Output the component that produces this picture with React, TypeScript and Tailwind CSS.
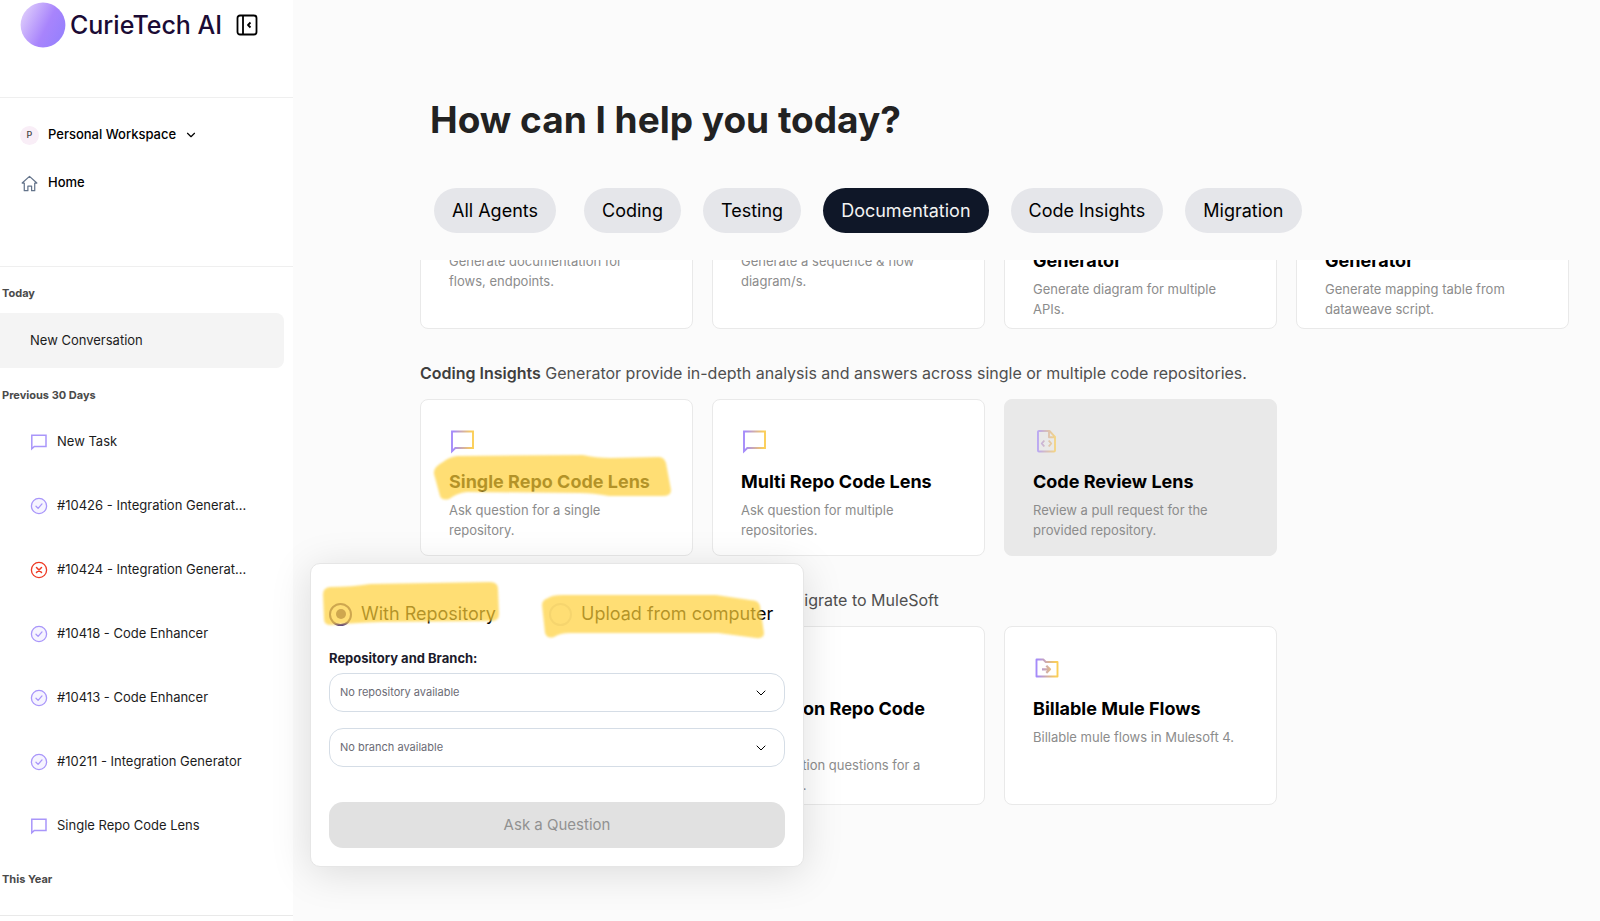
import { useState } from "react";
import { ChevronDown } from "lucide-react";

type Status = "chat" | "done" | "failed";

const HISTORY: { label: string; status: Status }[] = [
  { label: "New Task", status: "chat" },
  { label: "#10426 - Integration Generat...", status: "done" },
  { label: "#10424 - Integration Generat...", status: "failed" },
  { label: "#10418 - Code Enhancer", status: "done" },
  { label: "#10413 - Code Enhancer", status: "done" },
  { label: "#10211 - Integration Generator", status: "done" },
  { label: "Single Repo Code Lens", status: "chat" },
];

const TABS = ["All Agents", "Coding", "Testing", "Documentation", "Code Insights", "Migration"];

type IconName = "chat" | "file" | "folder";

interface Agent {
  title: string;
  text: string;
  icon: IconName;
  disabled?: boolean;
  marked?: boolean;
}

const DOCUMENTATION: Agent[] = [
  { title: "API Documentation", text: "Generate documentation for flows, endpoints.", icon: "file" },
  { title: "Flow Diagram", text: "Generate a sequence & flow diagram/s.", icon: "file" },
  { title: "Multi API Diagram Generator", text: "Generate diagram for multiple APIs.", icon: "file" },
  { title: "Mapping Table Doc Generator", text: "Generate mapping table from dataweave script.", icon: "file" },
];

const INSIGHTS: Agent[] = [
  { title: "Single Repo Code Lens", text: "Ask question for a single repository.", icon: "chat", marked: true },
  { title: "Multi Repo Code Lens", text: "Ask question for multiple repositories.", icon: "chat" },
  { title: "Code Review Lens", text: "Review a pull request for the provided repository.", icon: "file", disabled: true },
];

const MIGRATION: Agent[] = [
  { title: "Migration Generator", text: "Migrate a project to MuleSoft.", icon: "folder" },
  { title: "Migration Repo Code Lens", text: "Ask migration questions for a repository.", icon: "chat" },
  { title: "Billable Mule Flows", text: "Billable mule flows in Mulesoft 4.", icon: "folder" },
];

function StatusIcon({ status }: { status: Status }) {
  if (status === "chat") {
    return (
      <svg viewBox="0 0 18 18" className="w-[18px] h-[18px] shrink-0" fill="none" stroke="#a996fa" strokeWidth="1.5">
        <path d="M1.8 2.2h14.200v11.2H4.3L1.8 15.800z" />
      </svg>
    );
  }
  const failed = status === "failed";
  return (
    <svg
      viewBox="0 0 18 18"
      className="w-[18px] h-[18px] shrink-0"
      fill={failed ? "#fff" : "#f6f4ff"}
      stroke={failed ? "#ee3a24" : "#a996fa"}
      strokeWidth="1.3"
      strokeLinecap="round"
      strokeLinejoin="round"
    >
      <circle cx="9" cy="9" r="7.6" />
      {failed ? <path d="M6.5 6.5l5 5M11.5 6.5l-5 5" strokeWidth="1.5" /> : <path d="M6 9.3l2.1 2.1L12 6.9" fill="none" />}
    </svg>
  );
}

function AgentIcon({ name }: { name: IconName }) {
  return (
    <svg viewBox="0 0 26 26" className="w-[26px] h-[26px]" fill="none" stroke={`url(#grad-${name})`} strokeWidth="1.9" strokeLinejoin="round">
      <defs>
        <linearGradient id={`grad-${name}`} gradientUnits="userSpaceOnUse" x1="2" y1="0" x2="25" y2="0">
          <stop offset="0.1" stopColor="#a58bfa" />
          <stop offset="0.9" stopColor="#fbce57" />
        </linearGradient>
      </defs>
      {name === "chat" && <path d="M3 1.500h21v16.500H6.300L3 21.300z" strokeLinejoin="miter" />}
      {name === "file" && (
        <>
          <path d="M6 1h10.500L22 6.800V20.500a1 1 0 0 1-1 1H6a1 1 0 0 1-1-1V2a1 1 0 0 1 1-1zM16 1.200V7.200h5.800" strokeWidth="1.900" />
          <path d="M11.300 10.500L8.800 13.500l2.500 3M15.700 10.500l2.500 3-2.500 3" strokeWidth="1.900" />
        </>
      )}
      {name === "folder" && (
        <>
          <path d="M3.500 2.500h6.800l2.500 2.500H24.500v14.500H3.500z" />
          <path d="M9 12.300h7.500M13.300 8.700l3.700 3.600-3.700 3.600" strokeWidth="2.200" />
        </>
      )}
    </svg>
  );
}

function Marker({ d, className }: { d: string; className: string }) {
  return (
    <svg
      aria-hidden="true"
      viewBox="0 0 240 48"
      fill="#ffd13a"
      className={`absolute w-[240px] h-12 opacity-70 blur-[1px] pointer-events-none ${className}`}
    >
      <path d={d} />
    </svg>
  );
}

function AgentCard({ agent }: { agent: Agent }) {
  return (
    <button
      disabled={agent.disabled}
      className={`relative flex flex-col items-start text-left min-h-[157px] pl-7 pr-[34px] pt-[30px] pb-[9px] rounded-lg border border-[#e9e9e9] ${
        agent.disabled ? "bg-[#e9e9e9]" : "bg-white"
      }`}
    >
      <span className={agent.disabled ? "opacity-70" : ""}>
        <AgentIcon name={agent.icon} />
      </span>
      <span className="mt-3 text-lg leading-7 font-bold text-black">{agent.title}</span>
      <span className="mt-1 text-[13px] leading-5 text-[#8c8c8c]">{agent.text}</span>
      {agent.marked && (
        <Marker
          className="left-[12px] top-[54px]"
          d="M10 8Q16 3 24 2L150 1Q162 4 178 4L226 3Q231 3 233 9L238 36Q238 42 230 42H176Q160 39 146 39L34 38Q24 39 16 45Q9 47 7 42L1 20Q0 13 10 8Z"
        />
      )}
    </button>
  );
}

function Section({ name, text, agents }: { name?: string; text?: string; agents: Agent[] }) {
  return (
    <section>
      {name && (
        <p className="mb-[14px] text-base leading-6 text-[#4f4f4f] whitespace-nowrap">
          <b className="font-semibold text-[#3f3f3f]">{name}</b> {text}
        </p>
      )}
      <div className="grid grid-cols-4 gap-[19px]">
        {agents.map((agent) => (
          <AgentCard key={agent.title} agent={agent} />
        ))}
      </div>
    </section>
  );
}

function Sidebar() {
  return (
    <aside className="w-[293px] shrink-0 h-full bg-white flex flex-col overflow-hidden">
      <header className="h-[98px] shrink-0 border-b border-[#efefef] flex items-start pt-[2px] pl-5">
        <div className="flex items-center h-[45px]">
          <svg viewBox="0 0 46 46" className="w-[46px] h-[46px]">
            <defs>
              <linearGradient id="orb" x1="0" y1="0.2" x2="1" y2="0.7">
                <stop offset="0" stopColor="#e0cffb" />
                <stop offset="0.6" stopColor="#a884fc" />
                <stop offset="1" stopColor="#9680fd" />
              </linearGradient>
            </defs>
            <circle cx="23" cy="23" r="22.400" fill="url(#orb)" />
          </svg>
          <span className="w-[150px] ml-1 text-[25px] leading-8 font-medium text-[#1b0b35] whitespace-nowrap">CurieTech AI</span>
          <button aria-label="Collapse sidebar" className="ml-[15px]">
            <svg viewBox="0 0 24 24" className="w-6 h-6" fill="none" stroke="#000" strokeWidth="1.8" strokeLinejoin="round">
              <rect x="2.500" y="2.500" width="19" height="19" rx="2.500" />
              <path d="M8 2.500v19M15.500 9.500L13 12l2.500 2.500" />
            </svg>
          </button>
        </div>
      </header>

      <nav className="h-[169px] shrink-0 border-b border-[#efefef] pt-[25px] pl-5 flex flex-col gap-6 text-[13px] font-medium text-black">
        <button className="flex items-center h-6">
          <span className="w-[19px] h-[19px] rounded-full bg-[#f9eef7] flex items-center justify-center text-[9px] text-[#444]">P</span>
          <span className="ml-[9px]">Personal Workspace</span>
          <ChevronDown className="ml-2 w-[14px] h-[14px]" />
        </button>
        <a href="#home" className="flex items-center h-6">
          <svg viewBox="0 0 20 20" className="w-[19px] h-[19px]" fill="none" stroke="#64748b" strokeWidth="1.300" strokeLinejoin="round" strokeLinecap="round">
            <path d="M4.500 9.500H2.300L10 2.500l7.700 7h-2.200V17.500h-3.300v-4.700H8.300v4.700H4.500z" />
          </svg>
          <span className="ml-[9px]">Home</span>
        </a>
      </nav>

      <div className="flex-1 overflow-hidden text-[13px] text-[#1c1c1c]">
        <h2 className="mt-4 pl-[2px] text-[11px] leading-5 font-bold text-[#4a4a4a]">Today</h2>
        <a href="#new" className="mt-[10px] mr-[9px] h-[55px] pl-[30px] rounded-r-lg bg-[#f4f4f4] flex items-center">
          New Conversation
        </a>
        <h2 className="mt-[17px] pl-[2px] text-[11px] leading-5 font-bold text-[#4a4a4a]">Previous 30 Days</h2>
        <ul className="mt-[5px]">
          {HISTORY.map((item) => (
            <li key={item.label}>
              <a href="#task" className="h-16 pl-[30px] flex items-center gap-[9px]">
                <StatusIcon status={item.status} />
                <span className="whitespace-nowrap">{item.label}</span>
              </a>
            </li>
          ))}
        </ul>
        <h2 className="mt-[11px] pl-[2px] text-[11px] leading-5 font-bold text-[#4a4a4a]">This Year</h2>
      </div>
      <footer className="h-[6px] shrink-0 border-t border-[#e9e9e9]" />
    </aside>
  );
}

function RepoSelect({ label, empty }: { label: string; empty: string }) {
  return (
    <div className="relative">
      <select
        aria-label={label}
        className="appearance-none block w-full h-[39px] pl-[10px] pr-10 rounded-[14px] border border-[#d5dde6] bg-white text-[11px] text-[#6b6b75]"
      >
        <option>{empty}</option>
      </select>
      <ChevronDown strokeWidth={1.5} className="absolute right-4 top-[12px] w-4 h-4 text-black pointer-events-none" />
    </div>
  );
}

function RepositoryPopup() {
  const [source, setSource] = useState("repo");
  const radio =
    "appearance-none w-[23px] h-[23px] shrink-0 rounded-full border-2 flex items-center justify-center before:w-[10px] before:h-[10px] before:rounded-full checked:before:bg-[#5b4483] checked:border-[#5b4483] border-[#e3e0ea]";
  return (
    <form className="absolute left-[310px] top-[563px] w-[494px] p-[18px] rounded-[10px] border border-[#e6e6e6] bg-white shadow-[0_6px_40px_rgba(0,0,0,0.13)]">
      <div className="relative flex mt-[18px] h-7 text-lg text-black">
        <label className="w-[220px] flex items-center gap-[9px]">
          <input type="radio" name="source" className={radio} checked={source === "repo"} onChange={() => setSource("repo")} />
          With Repository
        </label>
        <label className="flex items-center gap-[9px] whitespace-nowrap">
          <input type="radio" name="source" className={radio} checked={source === "upload"} onChange={() => setSource("upload")} />
          Upload from computer
        </label>
        <Marker
          className="-left-[7px] -top-[19px]"
          d="M8 6Q30 6 48 3L168 1Q176 1 176 8L177 33Q177 40 170 40L60 41Q30 42 9 44Q2 44 2 38L1 13Q1 7 8 6Z"
        />
        <Marker
          className="left-[211px] -top-[7px]"
          d="M8 5Q12 2 22 2H176L210 7Q219 7 220 13L224 40Q224 46 216 45L178 40H30Q20 40 14 44Q7 46 5 40L2 12Q2 7 8 5Z"
        />
      </div>
      <p className="mt-5 text-[13px] leading-5 font-bold text-[#1b1b2b]">Repository and Branch:</p>
      <div className="mt-[5px] flex flex-col gap-4">
        <RepoSelect label="Repository" empty="No repository available" />
        <RepoSelect label="Branch" empty="No branch available" />
      </div>
      <button type="button" disabled className="mt-[35px] w-full h-[46px] rounded-[14px] bg-[#e1e1e1] text-[15px] text-[#919191]">
        Ask a Question
      </button>
    </form>
  );
}

export default function App() {
  const [tab, setTab] = useState("Documentation");
  return (
    <div className="relative flex h-screen overflow-hidden bg-[#fbfbfb] font-['Inter',sans-serif]">
      <Sidebar />
      <main className="flex-1 min-w-0 flex flex-col pl-[127px] pr-[31px]">
        <h1 className="mt-24 pl-[10px] text-[37px] leading-[48px] font-bold text-[#222]">How can I help you today?</h1>
        <div className="mt-11 pl-[14px] flex gap-[22px]">
          {TABS.map((name) => (
            <button
              key={name}
              onClick={() => setTab(name)}
              className={`h-[45px] px-[18px] rounded-full text-lg whitespace-nowrap first:mr-[6px] ${
                tab === name ? "bg-[#0f1728] text-[#f3f3f3]" : "bg-[#e5e6ea] text-black"
              }`}
            >
              {name}
            </button>
          ))}
        </div>
        <div className="mt-[27px] flex-1 overflow-hidden">
          <div className="-mt-[110px] flex flex-col gap-8">
            <Section agents={DOCUMENTATION} />
            <Section
              name="Coding Insights"
              text="Generator provide in-depth analysis and answers across single or multiple code repositories."
              agents={INSIGHTS}
            />
            <Section name="Migration" text="Code generators to analyze, build and migrate to MuleSoft" agents={MIGRATION} />
          </div>
        </div>
      </main>
      <RepositoryPopup />
    </div>
  );
}
